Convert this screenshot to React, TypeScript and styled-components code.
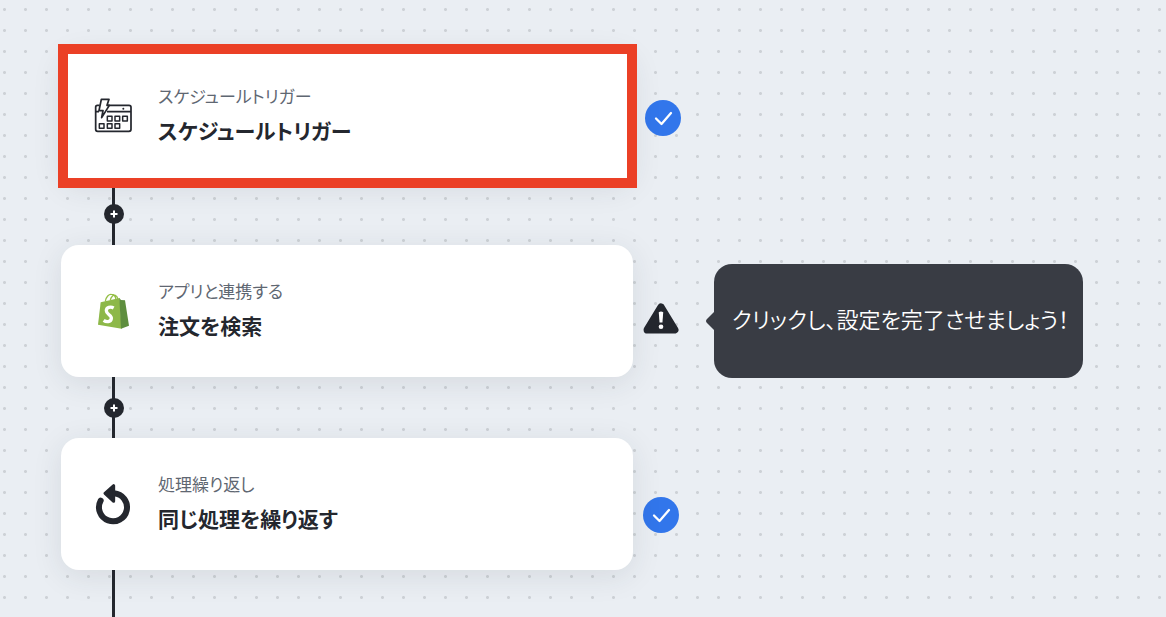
import React from 'react';
import styled, { createGlobalStyle } from 'styled-components';

const ink = '#24272e';

const GlobalStyle = createGlobalStyle`
  *, *::before, *::after { box-sizing: border-box; }
  body {
    margin: 0;
    color: ${ink};
    font-family: "Noto Sans CJK JP", "Noto Sans", sans-serif;
    font-feature-settings: "palt";
    background-color: #eaeef3;
    background-image: radial-gradient(circle, #cdd1d6 0, #cdd1d6 1px, transparent 2px);
    background-size: 21px 21px;
    background-position: 15px -1px;
  }
`;

const Canvas = styled.main`
  display: flex;
  flex-direction: column;
  min-height: 100vh;
  padding: 50px 24px 0 61px;
`;

const Step = styled.section`
  display: flex;
  align-items: flex-start;
`;

const Card = styled.button<{ $marked?: boolean }>`
  position: relative;
  display: flex;
  align-items: center;
  gap: 25px;
  flex: 0 1 572px;
  min-height: 132px;
  padding: 0 34px;
  border: 0;
  border-radius: 18px;
  background: #fff;
  box-shadow: 0 6px 30px rgba(36, 50, 60, 0.1);
  color: inherit;
  font: inherit;
  font-feature-settings: inherit;
  text-align: left;
  cursor: pointer;

  &::after {
    content: "";
    display: ${(p) => (p.$marked ? 'block' : 'none')};
    position: absolute;
    inset: -6px -4px -6px -3px;
    border: 10px solid #eb4026;
    background: #fff;
  }

  & > * {
    position: relative;
    z-index: 1;
  }
`;

const IconArt = styled.svg`
  display: block;
  flex: none;
  width: 38px;
  height: 40px;
  overflow: visible;
`;

const Labels = styled.span`
  display: flex;
  flex-direction: column;
  gap: 6px;
  padding-bottom: 2px;
`;

const Kind = styled.span`
  color: #5f6772;
  font-size: 17px;
  line-height: 24px;
`;

const Title = styled.strong`
  font-size: 21px;
  font-weight: 700;
  line-height: 32px;
`;

const Status = styled.span<{ $marked?: boolean }>`
  flex: none;
  padding: ${(p) => (p.$marked ? '50px 0 0 12px' : '59px 0 0 10px')};
  svg { display: block; overflow: visible; }
`;

const Tip = styled.p`
  position: relative;
  display: flex;
  align-items: center;
  min-height: 114px;
  margin: 19px 0 -19px 35px;
  padding: 0 14px 6px 18px;
  border-radius: 18px;
  background: #393c44;
  color: #fff;
  font-size: 22px;
  font-weight: 350;
  line-height: 32px;

  svg {
    position: absolute;
    right: 100%;
    top: 48px;
  }
`;

const Connector = styled.div<{ $size: number }>`
  display: flex;
  flex: 0 0 ${(p) => p.$size}px;
  align-items: center;
  justify-content: center;
  width: 20px;
  margin-left: 43px;
  background: linear-gradient(${ink}, ${ink}) 8px 0 / 3px 100% no-repeat;

  &:last-child { flex: 1 0 auto; }
`;

const AddButton = styled.button`
  display: grid;
  place-items: center;
  width: 20px;
  height: 20px;
  padding: 0;
  border: 0;
  border-radius: 50%;
  background: ${ink};
  cursor: pointer;
`;

const ScheduleIcon = () => (
  <IconArt viewBox="30 33 114 120" aria-hidden="true" fill="none" stroke={ink} strokeWidth="5.2" strokeLinejoin="round">
    <path d="M44 61H37Q32 61 32 67V133Q32 139 38 139H132Q138 139 138 133V67Q138 61 132 61H69" />
    <path d="M66 80H138M32 80H42" />
    <path d="M49 43H72L66 61H73L50 98L54 77H42Z" />
    <path d="M67 94H81V108H67ZM90 94H104V108H90ZM113 94H127V108H113ZM43 116H57V130H43ZM67 116H81V130H67ZM90 116H104V130H90Z" strokeWidth="4.5" />
    <circle cx="115" cy="71" r="3" fill={ink} stroke="none" />
  </IconArt>
);

const ShopifyIcon = () => (
  <IconArt viewBox="30 33 114 120" aria-hidden="true">
    <path d="M61 64C63 50 72 42 79 43C88 43 92 50 93 59M76 60C78 50 85 44 91 46C97 48 98 54 99 58" fill="none" stroke="#95bf47" strokeWidth="4" />
    <path d="M47 67L104 54L110 146L39 134Z" fill="#8db849" />
    <path d="M103 54L108 60L120 61L132 137L108 146Z" fill="#5e8e3e" />
    <path d="M86 84C77 79 64 82 64 92C64 104 81 105 79 116C77 127 64 127 56 121" fill="none" stroke="#fff" strokeWidth="10" />
  </IconArt>
);

const RepeatIcon = () => (
  <IconArt viewBox="30 27 114 120" aria-hidden="true">
    <path d="M47 77A42 42 0 1 0 87 55" fill="none" stroke={ink} strokeWidth="18" strokeLinecap="round" />
    <path d="M60 55L86 32V79Z" fill={ink} stroke={ink} strokeWidth="9" strokeLinejoin="round" />
  </IconArt>
);

const DoneIcon = () => (
  <svg width="36" height="36" viewBox="0 0 36 36" role="img" aria-label="設定済み">
    <circle cx="18" cy="18" r="18" fill="#3276eb" />
    <path d="M11 18.5L16.5 24L26 13" fill="none" stroke="#fff" strokeWidth="2.3" strokeLinecap="round" strokeLinejoin="round" />
  </svg>
);

const WarningIcon = () => (
  <svg width="36" height="31" viewBox="0 1 37 32" role="img" aria-label="未設定">
    <path d="M18.5 4.5L32.5 27.5H4.5Z" fill={ink} stroke={ink} strokeWidth="8" strokeLinejoin="round" />
    <path d="M16.2 9.5Q18.5 8 20.8 9.5L20 20H17Z" fill="#fff" />
    <circle cx="18.5" cy="24.5" r="2.4" fill="#fff" />
  </svg>
);

const Link = ({ size }: { size: number }) => (
  <Connector $size={size}>
    <AddButton type="button" aria-label="追加">
      <svg width="8" height="8" viewBox="0 0 8 8" aria-hidden="true">
        <path d="M4 0.5V7.5M0.5 4H7.5" stroke="#fff" strokeWidth="2" />
      </svg>
    </AddButton>
  </Connector>
);

type StepCardProps = { icon: React.ReactNode; kind: string; title: string; marked?: boolean };

const StepCard = ({ icon, kind, title, marked }: StepCardProps) => (
  <Card type="button" $marked={marked}>
    {icon}
    <Labels>
      <Kind>{kind}</Kind>
      <Title>{title}</Title>
    </Labels>
  </Card>
);

export default function App() {
  return (
    <>
      <GlobalStyle />
      <Canvas lang="ja">
        <Step>
          <StepCard marked icon={<ScheduleIcon />} kind="スケジュールトリガー" title="スケジュールトリガー" />
          <Status $marked><DoneIcon /></Status>
        </Step>
        <Link size={63} />
        <Step>
          <StepCard icon={<ShopifyIcon />} kind="アプリと連携する" title="注文を検索" />
          <Status><WarningIcon /></Status>
          <Tip>
            <svg width="8" height="18" viewBox="0 0 8 18" aria-hidden="true">
              <path d="M8 0L1 7Q-1 9 1 11L8 18Z" fill="#393c44" />
            </svg>
            クリックし、設定を完了させましょう！
          </Tip>
        </Step>
        <Link size={61} />
        <Step>
          <StepCard icon={<RepeatIcon />} kind="処理繰り返し" title="同じ処理を繰り返す" />
          <Status><DoneIcon /></Status>
        </Step>
        <Connector $size={47} />
      </Canvas>
    </>
  );
}
